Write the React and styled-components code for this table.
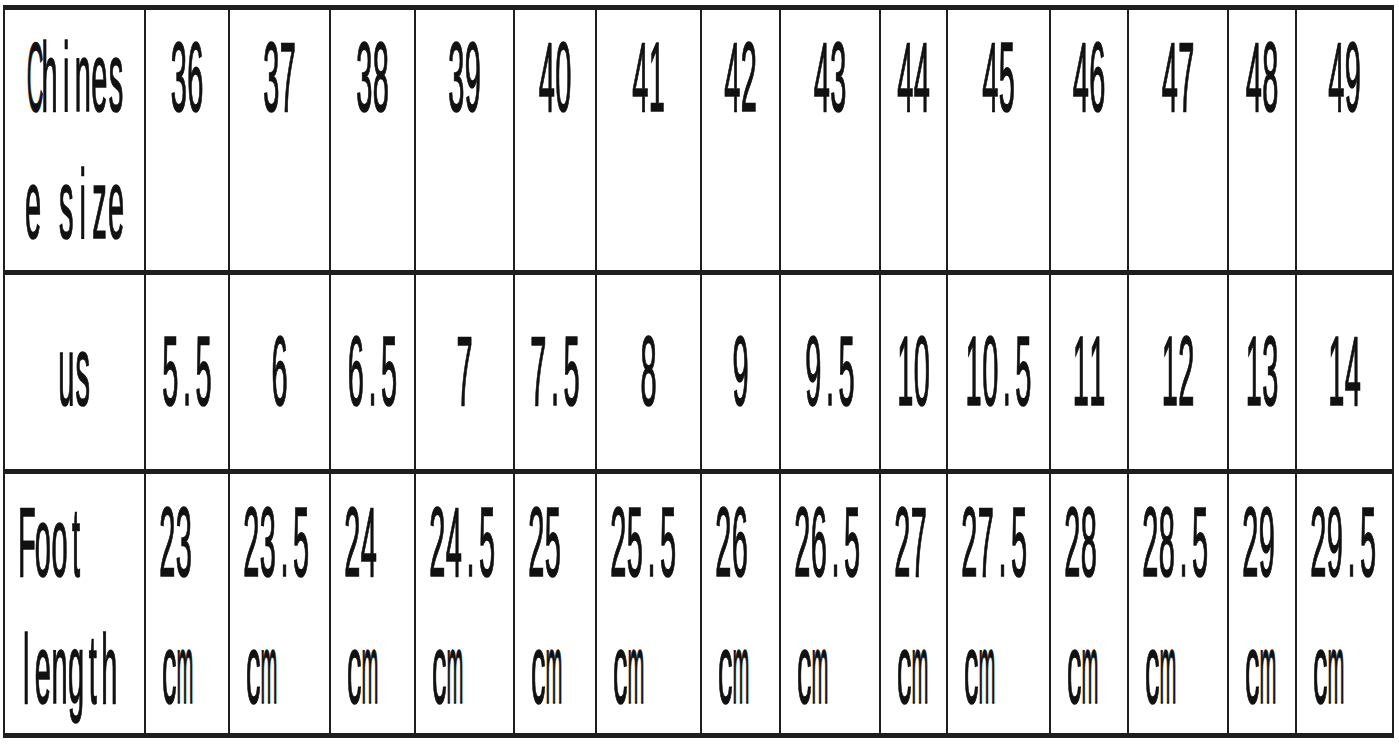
import React from 'react';
import styled, {createGlobalStyle} from 'styled-components';

const columns = [139, 82, 99, 83, 97, 80, 103, 77, 98, 65, 101, 76, 98, 66, 95];

const chinese = ['36', '37', '38', '39', '40', '41', '42', '43', '44', '45', '46', '47', '48', '49'];
const us = ['5.5', '6', '6.5', '7', '7.5', '8', '9', '9.5', '10', '10.5', '11', '12', '13', '14'];
const foot = ['23', '23.5', '24', '24.5', '25', '25.5', '26', '26.5', '27', '27.5', '28', '28.5', '29', '29.5'];

// wide glyphs get squeezed into the half-width cell, like the original table font
const squeeze = {C: 0.8, m: 0.7};
const nudge = {c: 2, m: -2};

const GlobalStyle = createGlobalStyle`
  html, body {
    margin: 0;
    background: #ffffff;
  }
`

function Mono({text}) {
    return (
        <Glyphs>
            {text.split('').map((ch, i) => (
                <Char key={i} $sx={squeeze[ch] || 1} $dx={nudge[ch] || 0}>
                    {ch === ' ' ? '\u00a0' : ch}
                </Char>
            ))}
        </Glyphs>
    );
}

function SizeChart() {
    return (
        <Page>
            <GlobalStyle/>
            <Table>
                <Cell $row="top" $align="center">
                    <Line><Mono text="Chines"/></Line>
                    <Line><Mono text="e size"/></Line>
                </Cell>
                {chinese.map(v => (
                    <Cell key={'c' + v} $row="top" $align="center">
                        <Line><Mono text={v}/></Line>
                    </Cell>
                ))}

                <Cell $row="mid" $align="center">
                    <Line><Mono text="us"/></Line>
                </Cell>
                {us.map(v => (
                    <Cell key={'u' + v} $row="mid" $align="center">
                        <Line><Mono text={v}/></Line>
                    </Cell>
                ))}

                <Cell $row="bottom" $align="left">
                    <Line><Mono text="Foot"/></Line>
                    <Line><Mono text="length"/></Line>
                </Cell>
                {foot.map(v => (
                    <Cell key={'f' + v} $row="bottom" $align="left">
                        <Line><Mono text={v}/></Line>
                        <Line><Mono text="cm"/></Line>
                    </Cell>
                ))}
            </Table>
        </Page>
    );
}

const Page = styled.div`
  width: 1399px;
  height: 748px;
  padding: 5px 0 0 3px;
  box-sizing: border-box;
  background: #ffffff;
`

const Table = styled.div`
  display: grid;
  width: max-content;
  grid-template-columns: ${columns.map(w => w + 'px').join(' ')};
  grid-template-rows: 260px 194px 259px;
  column-gap: 2px;
  row-gap: 5px;
  padding: 5px 2px;
  background: #1e1e1e;
`

const Cell = styled.div`
  background: #ffffff;
  display: flex;
  flex-direction: column;
  align-items: ${p => (p.$align === 'left' ? 'flex-start' : 'center')};
  padding-left: ${p => (p.$align === 'left' ? '13px' : '0')};
  padding-top: ${p => (p.$row === 'top' ? '19px' : p.$row === 'mid' ? '48px' : '20px')};
  overflow: hidden;
`

const Line = styled.div`
  height: 127px;
  flex-shrink: 0;
`

const Glyphs = styled.div`
  display: flex;
  height: 29px;
  font-family: "Liberation Sans", Arial, sans-serif;
  font-size: 29px;
  line-height: 29px;
  color: #111111;
  -webkit-text-stroke: 0.5px #111111;
  transform: scaleY(3.4);
  transform-origin: top left;
  white-space: pre;
`

const Char = styled.span`
  display: inline-block;
  width: 16.6px;
  text-align: center;
  transform: translateX(${p => p.$dx}px) scaleX(${p => p.$sx});
`

export default SizeChart;
